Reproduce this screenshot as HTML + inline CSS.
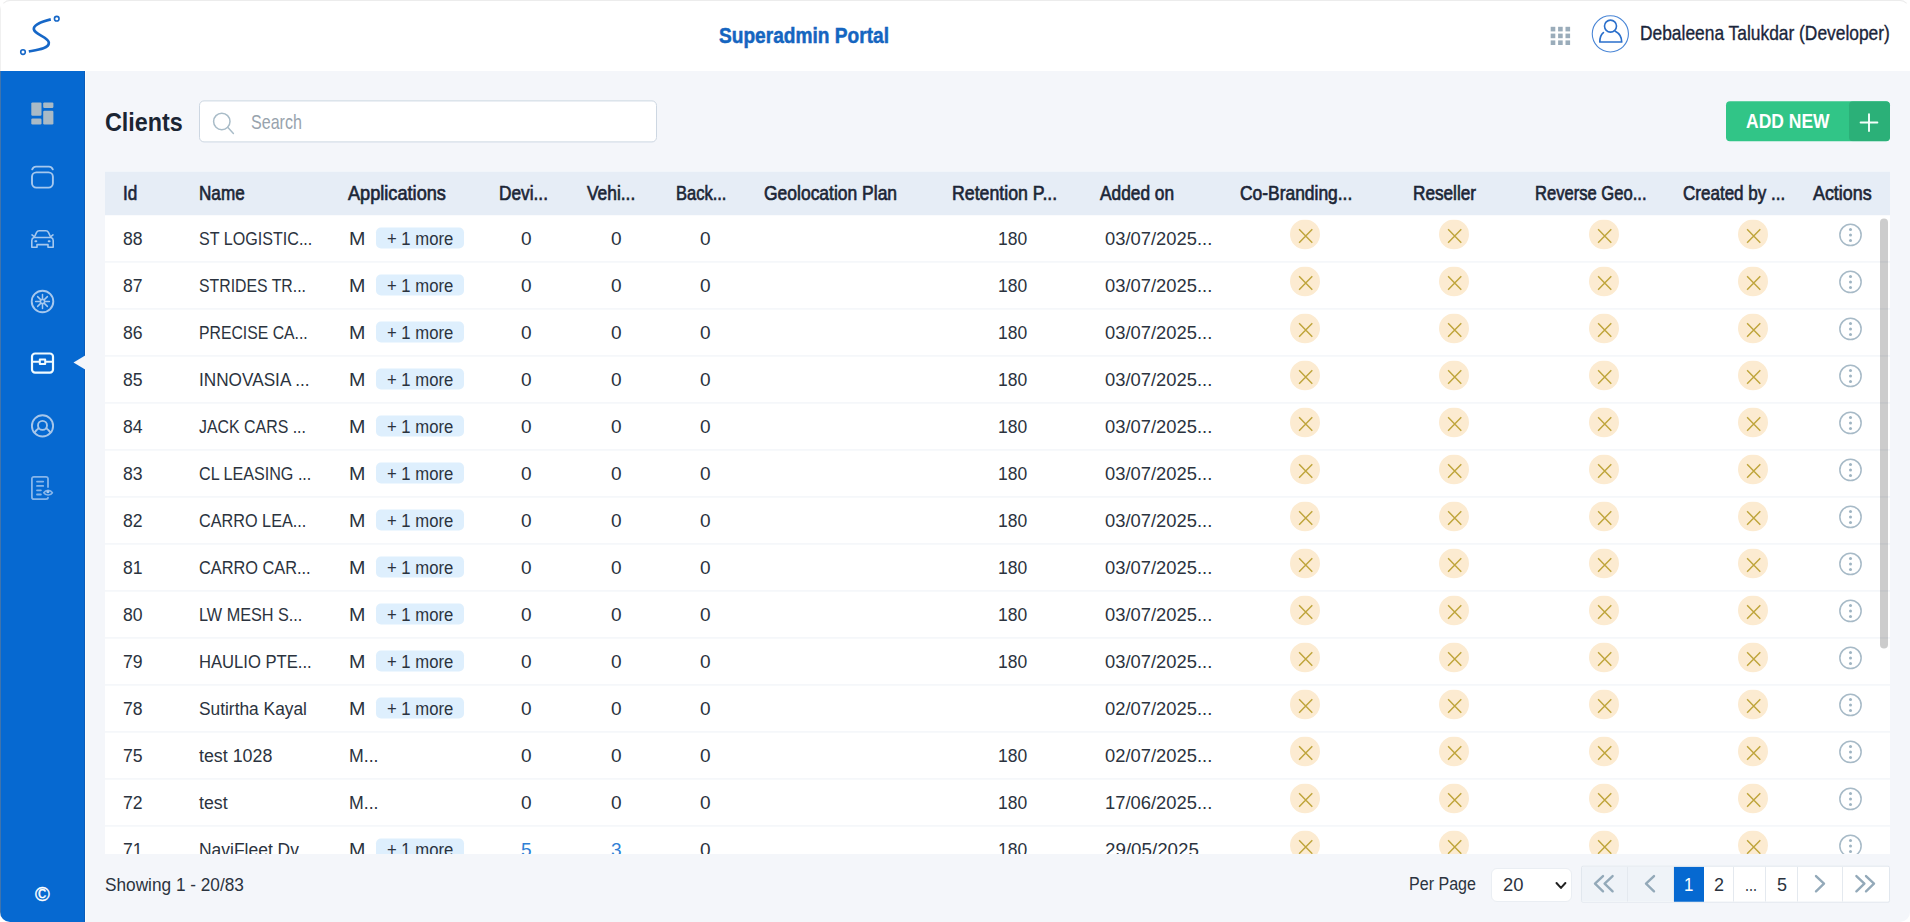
<!DOCTYPE html>
<html lang="en">
<head>
<meta charset="utf-8">
<title>Superadmin Portal - Clients</title>
<style>
*{box-sizing:border-box;margin:0;padding:0}
html,body{width:1910px;height:922px;overflow:hidden;background:#f4f6fa}
body{font-family:"Liberation Sans",sans-serif;font-size:18.7px;color:#2b333e;position:relative}
.t{position:absolute;top:0;white-space:nowrap;display:inline-block;transform-origin:0 50%}
#top{position:absolute;left:0;top:0;width:1910px;height:71px;background:#fff;border-top:1px solid #f0f1f2}
#top .t{line-height:70px}
#side{position:absolute;left:0;top:71px;width:85px;height:851px;background:#0669d1}
#side svg{position:absolute}
#main{position:absolute;left:85px;top:71px;width:1825px;height:851px;background:#f4f6fa}
#title{position:absolute;left:0;top:100px;height:42px;width:190px}
#title .t{line-height:42px;color:#1b2533}
#search{position:absolute;left:199px;top:100px;width:458px;height:42.3px;border:1px solid #cdd7e2;border-radius:5px;background:#fff;transform:translateY(0.4px)}
#search .t{line-height:43px;color:#98a3ad}
#search svg{position:absolute;left:11px;top:7.6px}
#add{position:absolute;left:1726px;top:101px;width:164px;height:40px;transform:translateY(0.35px);border-radius:4px;background:#31c587;overflow:hidden}
#add i{position:absolute;right:0;top:0;width:41px;height:40px;background:#2bb078;border-radius:4px}
#add .t{line-height:40px;color:#fff}
#add svg{position:absolute;left:133px;top:10.6px}
#tbl{position:absolute;left:105px;top:171px;width:1785px;height:683px;overflow:hidden;background:#fff}
#tin{position:absolute;left:0;top:0;width:1785px;height:760px;transform:translateY(0.45px)}
#thead{position:absolute;left:0;top:0;width:1785px;height:44px;background:#e6edf6}
#thead .t{line-height:44px;color:#1c2636}
#tbody{position:absolute;left:0;top:44px;width:1785px}
.row{position:relative;height:47px;background:#fff}
.row::after{content:"";position:absolute;left:0;width:1785px;top:45.5px;height:2px;background:#edf1f6}
.row .t{line-height:47px}
.row .lk{color:#2f7fd6}
.bdg{position:absolute;left:271.2px;top:12.1px;width:87.6px;height:21px;border-radius:5px;background:#deeffd}
.xi{position:absolute;top:4px}
.ai{position:absolute;top:7px}
#sb{position:absolute;left:1880px;top:218px;width:8px;height:430px;border-radius:4px;background:rgba(0,0,0,0.2);transform:translateY(0.4px)}
#foot .t{line-height:36px}
#showing{position:absolute;left:105px;top:867px;height:36px}
#perpage{position:absolute;left:1409px;top:866px;height:36px}
#sel{position:absolute;left:1491px;top:868px;width:81px;height:34px;border:1px solid #eaeef3;border-radius:6px;background:#fff}
#sel .t{line-height:32px;color:#2b333e}
#sel svg{position:absolute;left:62px;top:11px}
#pg{position:absolute;left:1581px;top:866px;width:309px;height:37px;border:1px solid #e1e7ee;border-radius:2px;background:#fff;overflow:hidden;transform:translateY(-0.3px)}
#pg div{position:absolute;top:0;height:35px;border-right:1px solid #e4e9ef}
#pg .t{line-height:36px}
#pg svg{position:absolute;top:6.2px}
#frame{position:absolute;left:0;top:0;width:1910px;height:922px;border-radius:10px;border:1px solid transparent;border-top-color:#ececec;box-shadow:0 0 0 30px #fff;pointer-events:none}
#edge{position:absolute;left:0;top:71px;width:1px;height:851px;background:#3f74ad}
#edge2{position:absolute;left:0;top:0;width:1px;height:71px;background:#f0f0f0}
#ring{position:absolute;left:84px;top:71px;width:2px;height:851px;background:linear-gradient(90deg,#0a5cba 0,#0a5cba 1px,#f9fcfe 1px,#f9fcfe 2px)}
</style>
</head>
<body>
<div id="top">
  <svg style="position:absolute;left:14px;top:9px" width="52" height="52" viewBox="0 0 52 52" fill="none" stroke="#1667c7">
    <circle cx="9" cy="42.05" r="2.3" stroke-width="1.6"/>
    <circle cx="42.75" cy="8.72" r="2.3" stroke-width="1.6"/>
    <path d="M36.8 9.35 C28 11.5 19.2 14.5 19.85 19.3 C20.5 24.5 34.6 27 34.85 32.8 C35 38.5 24 39.8 14.8 41.45" stroke-width="2.7"/>
  </svg>
  <span class="t" style="left:719.0px;transform:scaleX(0.8852);font-size:21.6px;font-weight:700;color:#1565c0;top:0px;-webkit-text-stroke:0.5px #1565c0;">Superadmin Portal</span>
  <svg style="position:absolute;left:1550px;top:25px" width="22" height="21" viewBox="0 0 22 21" fill="#9aacba">
    <rect x="0.7" y="0.8" width="4.6" height="4.6"/><rect x="8.1" y="0.8" width="4.6" height="4.6"/><rect x="15.5" y="0.8" width="4.6" height="4.6"/>
    <rect x="0.7" y="7.6" width="4.6" height="4.6"/><rect x="8.1" y="7.6" width="4.6" height="4.6"/><rect x="15.5" y="7.6" width="4.6" height="4.6"/>
    <rect x="0.7" y="14.4" width="4.6" height="4.6"/><rect x="8.1" y="14.4" width="4.6" height="4.6"/><rect x="15.5" y="14.4" width="4.6" height="4.6"/>
  </svg>
  <svg style="position:absolute;left:1591px;top:14px" width="39" height="39" viewBox="0 0 39 39" fill="none" stroke="#2a6fcb">
    <circle cx="19.35" cy="18.86" r="18.1" stroke-width="1.1" stroke="#4a86d6"/>
    <circle cx="19.5" cy="11.1" r="6.0" stroke-width="1.6"/>
    <path d="M12.4 17.6 C9.8 19.6 8.8 23 8.8 27 L30.7 27 C30.7 22.5 28.3 18.4 24.3 16.3" stroke-width="1.7" stroke-linejoin="round" stroke-linecap="round"/>
  </svg>
  <span class="t" style="left:1640.0px;transform:scaleX(0.8399);font-size:20.7px;color:#1b263b;top:-3.5px;-webkit-text-stroke:0.35px #1b263b;">Debaleena Talukdar (Developer)</span>
</div>

<div id="side">
  <!-- dashboard -->
  <svg style="left:31px;top:31px" width="23" height="23" viewBox="0 0 23 23" fill="#a9bac6">
    <rect x="0.3" y="0.4" width="10.2" height="13.4" rx="1.2"/><rect x="12.2" y="0.4" width="10.2" height="5.6" rx="1.2"/>
    <rect x="0.3" y="16.6" width="10.2" height="5.8" rx="1.2"/><rect x="12.2" y="8.8" width="10.2" height="13.6" rx="1.2"/>
  </svg>
  <!-- layers/card -->
  <svg style="left:30px;top:93px" width="25" height="26" viewBox="0 0 25 26" fill="none" stroke="#a6c8ee" stroke-width="1.9" stroke-linecap="round">
    <rect x="2" y="8.4" width="20.9" height="15.2" rx="4.4"/>
    <path d="M2.2 5.3 C3.2 3.3 4.4 2.6 6 2.6 L19 2.6 C20.6 2.6 21.8 3.3 22.8 5.3"/>
  </svg>
  <!-- car -->
  <svg style="left:30px;top:158px" width="25" height="21" viewBox="0 0 25 21" fill="none" stroke="#a6c8ee" stroke-width="1.6" stroke-linejoin="round" stroke-linecap="round">
    <path d="M4.4 8 L6.6 3.4 C7.2 2.2 8 1.8 9.2 1.8 L15.8 1.8 C17 1.8 17.8 2.2 18.4 3.4 L20.6 8"/>
    <path d="M2 5.9 L3.6 7.1 M23 5.9 L21.4 7.1"/>
    <path d="M4 8.5 L21 8.5 C22.6 9 23.2 10 23.2 11.4 L23.2 18.2 L18 18.2 L18 15.6 L7 15.6 L7 18.2 L1.8 18.2 L1.8 11.4 C1.8 10 2.4 9 4 8.5 Z"/>
    <path d="M5.4 12.2 L6.3 12.2 M18.7 12.2 L19.6 12.2" stroke-width="2"/>
  </svg>
  <!-- wheel -->
  <svg style="left:30px;top:217.5px" width="25" height="25" viewBox="0 0 25 25" fill="none" stroke="#a6c8ee" stroke-width="1.5" stroke-linecap="round">
    <circle cx="12.5" cy="12.5" r="10.8" stroke-width="1.9"/>
    <circle cx="12.5" cy="12.5" r="2.1" stroke-width="1.6"/>
    <path d="M12.5 5.6 V9.6 M12.5 15.4 V19.4 M5.6 12.5 H9.6 M15.4 12.5 H19.4 M7.6 7.6 L10.4 10.4 M14.6 14.6 L17.4 17.4 M17.4 7.6 L14.6 10.4 M10.4 14.6 L7.6 17.4"/>
  </svg>
  <!-- active: chest -->
  <svg style="left:30px;top:281px" width="25" height="23" viewBox="0 0 25 23" fill="none" stroke="#f0fbff" stroke-width="2.2" stroke-linejoin="round">
    <rect x="2" y="1.5" width="21" height="19.1" rx="3.1"/>
    <path d="M2 9.8 H9.8 M15.2 9.8 H23" stroke-width="2"/>
    <rect x="9.8" y="7.5" width="5.4" height="4.5" stroke-width="2"/>
  </svg>
  
  <!-- user -->
  <svg style="left:30px;top:343px" width="25" height="25" viewBox="0 0 25 25" fill="none" stroke="#a6c6ea" stroke-width="1.9" stroke-linecap="round">
    <circle cx="12.5" cy="11.9" r="10.6"/>
    <circle cx="12.5" cy="11.4" r="4.5"/>
    <path d="M4.7 18.6 C6 16.5 7.4 15.2 8.7 14.3 M20.3 18.6 C19 16.5 17.6 15.2 16.3 14.3"/>
  </svg>
  <!-- report -->
  <svg style="left:30px;top:405px" width="25" height="25" viewBox="0 0 25 25" fill="none" stroke="#86b5ea" stroke-width="1.8" stroke-linecap="round" stroke-linejoin="round">
    <path d="M18 11 V2.8 C18 1.6 17.2 0.9 16 0.9 H3.9 C2.7 0.9 1.9 1.6 1.9 2.8 V21.3 C1.9 22.5 2.7 23.2 3.9 23.2 H16 C17.2 23.2 18 22.6 18 21.6"/>
    <path d="M7 5.6 H13.2 M7 9.9 H13.2 M7 14.3 H10.9 M7 18.5 H10.9"/>
    <path d="M13.8 16.7 C15.8 13.6 20.4 13.6 22.4 16.7 C20.4 19.8 15.8 19.8 13.8 16.7 Z" stroke-width="1.6"/>
    <circle cx="17.9" cy="15.7" r="1.5" fill="#a6c8ee" stroke="none"/>
  </svg>
  <span class="t" style="left:35px;top:812px;line-height:22px;font-size:20px;color:#fff;-webkit-text-stroke:0.4px #fff">©</span>
</div>

<div id="title"><span class="t" style="left:105.0px;transform:translateY(0.6px) scaleX(0.9334);font-size:25px;font-weight:700;">Clients</span></div>
<div id="search">
  <svg width="26" height="26" viewBox="0 0 26 26" fill="none" stroke="#a9bcc8" stroke-width="1.5" stroke-linecap="round"><circle cx="10.8" cy="12.05" r="8.2"/><path d="M16.7 17.9 L22.4 24"/></svg>
  <span class="t" style="left:51.4px;transform:scaleX(0.8129);font-size:19.8px;">Search</span>
</div>
<div id="add"><i></i><span class="t" style="left:20.0px;transform:scaleX(0.8413);font-size:20.8px;font-weight:700;">ADD NEW</span>
  <svg width="20" height="20" viewBox="0 0 20 20" stroke="#f4fffa" stroke-width="1.9" stroke-linecap="round"><path d="M10 1.8 V18.6 M1.6 10.2 H18.4"/></svg>
</div>

<div id="tbl"><div id="tin">
  <div id="thead"><span class="t" style="left:18.4px;transform:translateY(-0.35px) scaleX(0.8659);font-size:19.8px;-webkit-text-stroke:0.65px #1c2636;">Id</span><span class="t" style="left:93.8px;transform:translateY(-0.35px) scaleX(0.8652);font-size:19.8px;-webkit-text-stroke:0.65px #1c2636;">Name</span><span class="t" style="left:243.3px;transform:translateY(-0.35px) scaleX(0.9179);font-size:19.8px;-webkit-text-stroke:0.65px #1c2636;">Applications</span><span class="t" style="left:393.8px;transform:translateY(-0.35px) scaleX(0.8732);font-size:19.8px;-webkit-text-stroke:0.65px #1c2636;">Devi...</span><span class="t" style="left:482.1px;transform:translateY(-0.35px) scaleX(0.8775);font-size:19.8px;-webkit-text-stroke:0.65px #1c2636;">Vehi...</span><span class="t" style="left:571.1px;transform:translateY(-0.35px) scaleX(0.8344);font-size:19.8px;-webkit-text-stroke:0.65px #1c2636;">Back...</span><span class="t" style="left:659.1px;transform:translateY(-0.35px) scaleX(0.8833);font-size:19.8px;-webkit-text-stroke:0.65px #1c2636;">Geolocation Plan</span><span class="t" style="left:847.1px;transform:translateY(-0.35px) scaleX(0.8968);font-size:19.8px;-webkit-text-stroke:0.65px #1c2636;">Retention P...</span><span class="t" style="left:994.6px;transform:translateY(-0.35px) scaleX(0.8740);font-size:19.8px;-webkit-text-stroke:0.65px #1c2636;">Added on</span><span class="t" style="left:1135.3px;transform:translateY(-0.35px) scaleX(0.8804);font-size:19.8px;-webkit-text-stroke:0.65px #1c2636;">Co-Branding...</span><span class="t" style="left:1307.5px;transform:translateY(-0.35px) scaleX(0.8688);font-size:19.8px;-webkit-text-stroke:0.65px #1c2636;">Reseller</span><span class="t" style="left:1430.4px;transform:translateY(-0.35px) scaleX(0.8381);font-size:19.8px;-webkit-text-stroke:0.65px #1c2636;">Reverse Geo...</span><span class="t" style="left:1578.0px;transform:translateY(-0.35px) scaleX(0.8607);font-size:19.8px;-webkit-text-stroke:0.65px #1c2636;">Created by ...</span><span class="t" style="left:1708.4px;transform:translateY(-0.35px) scaleX(0.9040);font-size:19.8px;-webkit-text-stroke:0.65px #1c2636;">Actions</span></div>
  <div id="tbody">
<div class="row"><span class="t" style="left:18.2px;transform:translateY(-0.35px) scaleX(0.9423);">88</span><span class="t" style="left:94.0px;transform:translateY(-0.35px) scaleX(0.8615);">ST LOGISTIC...</span><span class="t" style="left:243.7px;transform:translateY(-0.35px) scaleX(1.0528);">M</span><span class="bdg"></span><span class="t" style="left:282.3px;transform:translateY(-0.35px) scaleX(0.8921);">+ 1 more</span><span class="t" style="left:416.2px;transform:translateY(-0.35px) scaleX(1.0192);">0</span><span class="t" style="left:505.7px;transform:translateY(-0.35px) scaleX(1.0192);">0</span><span class="t" style="left:595.2px;transform:translateY(-0.35px) scaleX(1.0192);">0</span><span class="t" style="left:893.3px;transform:translateY(-0.35px) scaleX(0.9359);">180</span><span class="t" style="left:999.8px;transform:translateY(-0.35px) scaleX(0.9828);">03/07/2025...</span><svg class="xi" style="left:1184.5px" width="30" height="30" viewBox="0 0 30 30"><circle cx="15" cy="15" r="15" fill="#fcebd1"/><path d="M9.1 9.7 L22.3 23.3 M22.3 9.7 L9.1 23.3" stroke="#bfa53c" stroke-width="1.45" fill="none"/></svg><svg class="xi" style="left:1334px" width="30" height="30" viewBox="0 0 30 30"><circle cx="15" cy="15" r="15" fill="#fcebd1"/><path d="M9.1 9.7 L22.3 23.3 M22.3 9.7 L9.1 23.3" stroke="#bfa53c" stroke-width="1.45" fill="none"/></svg><svg class="xi" style="left:1483.5px" width="30" height="30" viewBox="0 0 30 30"><circle cx="15" cy="15" r="15" fill="#fcebd1"/><path d="M9.1 9.7 L22.3 23.3 M22.3 9.7 L9.1 23.3" stroke="#bfa53c" stroke-width="1.45" fill="none"/></svg><svg class="xi" style="left:1633px" width="30" height="30" viewBox="0 0 30 30"><circle cx="15" cy="15" r="15" fill="#fcebd1"/><path d="M9.1 9.7 L22.3 23.3 M22.3 9.7 L9.1 23.3" stroke="#bfa53c" stroke-width="1.45" fill="none"/></svg><svg class="ai" style="left:1733px" width="26" height="26" viewBox="0 0 26 26"><circle cx="12.5" cy="12.45" r="10.65" fill="#fff" stroke="#a7bac7" stroke-width="1.5"/><circle cx="12.5" cy="6.95" r="1.5" fill="#9fb4c2"/><circle cx="12.5" cy="12.45" r="1.5" fill="#9fb4c2"/><circle cx="12.5" cy="17.95" r="1.5" fill="#9fb4c2"/></svg></div>
<div class="row"><span class="t" style="left:18.2px;transform:translateY(-0.35px) scaleX(0.9423);">87</span><span class="t" style="left:94.0px;transform:translateY(-0.35px) scaleX(0.8464);">STRIDES TR...</span><span class="t" style="left:243.7px;transform:translateY(-0.35px) scaleX(1.0528);">M</span><span class="bdg"></span><span class="t" style="left:282.3px;transform:translateY(-0.35px) scaleX(0.8921);">+ 1 more</span><span class="t" style="left:416.2px;transform:translateY(-0.35px) scaleX(1.0192);">0</span><span class="t" style="left:505.7px;transform:translateY(-0.35px) scaleX(1.0192);">0</span><span class="t" style="left:595.2px;transform:translateY(-0.35px) scaleX(1.0192);">0</span><span class="t" style="left:893.3px;transform:translateY(-0.35px) scaleX(0.9359);">180</span><span class="t" style="left:999.8px;transform:translateY(-0.35px) scaleX(0.9828);">03/07/2025...</span><svg class="xi" style="left:1184.5px" width="30" height="30" viewBox="0 0 30 30"><circle cx="15" cy="15" r="15" fill="#fcebd1"/><path d="M9.1 9.7 L22.3 23.3 M22.3 9.7 L9.1 23.3" stroke="#bfa53c" stroke-width="1.45" fill="none"/></svg><svg class="xi" style="left:1334px" width="30" height="30" viewBox="0 0 30 30"><circle cx="15" cy="15" r="15" fill="#fcebd1"/><path d="M9.1 9.7 L22.3 23.3 M22.3 9.7 L9.1 23.3" stroke="#bfa53c" stroke-width="1.45" fill="none"/></svg><svg class="xi" style="left:1483.5px" width="30" height="30" viewBox="0 0 30 30"><circle cx="15" cy="15" r="15" fill="#fcebd1"/><path d="M9.1 9.7 L22.3 23.3 M22.3 9.7 L9.1 23.3" stroke="#bfa53c" stroke-width="1.45" fill="none"/></svg><svg class="xi" style="left:1633px" width="30" height="30" viewBox="0 0 30 30"><circle cx="15" cy="15" r="15" fill="#fcebd1"/><path d="M9.1 9.7 L22.3 23.3 M22.3 9.7 L9.1 23.3" stroke="#bfa53c" stroke-width="1.45" fill="none"/></svg><svg class="ai" style="left:1733px" width="26" height="26" viewBox="0 0 26 26"><circle cx="12.5" cy="12.45" r="10.65" fill="#fff" stroke="#a7bac7" stroke-width="1.5"/><circle cx="12.5" cy="6.95" r="1.5" fill="#9fb4c2"/><circle cx="12.5" cy="12.45" r="1.5" fill="#9fb4c2"/><circle cx="12.5" cy="17.95" r="1.5" fill="#9fb4c2"/></svg></div>
<div class="row"><span class="t" style="left:18.2px;transform:translateY(-0.35px) scaleX(0.9423);">86</span><span class="t" style="left:94.0px;transform:translateY(-0.35px) scaleX(0.8443);">PRECISE CA...</span><span class="t" style="left:243.7px;transform:translateY(-0.35px) scaleX(1.0528);">M</span><span class="bdg"></span><span class="t" style="left:282.3px;transform:translateY(-0.35px) scaleX(0.8921);">+ 1 more</span><span class="t" style="left:416.2px;transform:translateY(-0.35px) scaleX(1.0192);">0</span><span class="t" style="left:505.7px;transform:translateY(-0.35px) scaleX(1.0192);">0</span><span class="t" style="left:595.2px;transform:translateY(-0.35px) scaleX(1.0192);">0</span><span class="t" style="left:893.3px;transform:translateY(-0.35px) scaleX(0.9359);">180</span><span class="t" style="left:999.8px;transform:translateY(-0.35px) scaleX(0.9828);">03/07/2025...</span><svg class="xi" style="left:1184.5px" width="30" height="30" viewBox="0 0 30 30"><circle cx="15" cy="15" r="15" fill="#fcebd1"/><path d="M9.1 9.7 L22.3 23.3 M22.3 9.7 L9.1 23.3" stroke="#bfa53c" stroke-width="1.45" fill="none"/></svg><svg class="xi" style="left:1334px" width="30" height="30" viewBox="0 0 30 30"><circle cx="15" cy="15" r="15" fill="#fcebd1"/><path d="M9.1 9.7 L22.3 23.3 M22.3 9.7 L9.1 23.3" stroke="#bfa53c" stroke-width="1.45" fill="none"/></svg><svg class="xi" style="left:1483.5px" width="30" height="30" viewBox="0 0 30 30"><circle cx="15" cy="15" r="15" fill="#fcebd1"/><path d="M9.1 9.7 L22.3 23.3 M22.3 9.7 L9.1 23.3" stroke="#bfa53c" stroke-width="1.45" fill="none"/></svg><svg class="xi" style="left:1633px" width="30" height="30" viewBox="0 0 30 30"><circle cx="15" cy="15" r="15" fill="#fcebd1"/><path d="M9.1 9.7 L22.3 23.3 M22.3 9.7 L9.1 23.3" stroke="#bfa53c" stroke-width="1.45" fill="none"/></svg><svg class="ai" style="left:1733px" width="26" height="26" viewBox="0 0 26 26"><circle cx="12.5" cy="12.45" r="10.65" fill="#fff" stroke="#a7bac7" stroke-width="1.5"/><circle cx="12.5" cy="6.95" r="1.5" fill="#9fb4c2"/><circle cx="12.5" cy="12.45" r="1.5" fill="#9fb4c2"/><circle cx="12.5" cy="17.95" r="1.5" fill="#9fb4c2"/></svg></div>
<div class="row"><span class="t" style="left:18.2px;transform:translateY(-0.35px) scaleX(0.9423);">85</span><span class="t" style="left:94.0px;transform:translateY(-0.35px) scaleX(0.9201);">INNOVASIA ...</span><span class="t" style="left:243.7px;transform:translateY(-0.35px) scaleX(1.0528);">M</span><span class="bdg"></span><span class="t" style="left:282.3px;transform:translateY(-0.35px) scaleX(0.8921);">+ 1 more</span><span class="t" style="left:416.2px;transform:translateY(-0.35px) scaleX(1.0192);">0</span><span class="t" style="left:505.7px;transform:translateY(-0.35px) scaleX(1.0192);">0</span><span class="t" style="left:595.2px;transform:translateY(-0.35px) scaleX(1.0192);">0</span><span class="t" style="left:893.3px;transform:translateY(-0.35px) scaleX(0.9359);">180</span><span class="t" style="left:999.8px;transform:translateY(-0.35px) scaleX(0.9828);">03/07/2025...</span><svg class="xi" style="left:1184.5px" width="30" height="30" viewBox="0 0 30 30"><circle cx="15" cy="15" r="15" fill="#fcebd1"/><path d="M9.1 9.7 L22.3 23.3 M22.3 9.7 L9.1 23.3" stroke="#bfa53c" stroke-width="1.45" fill="none"/></svg><svg class="xi" style="left:1334px" width="30" height="30" viewBox="0 0 30 30"><circle cx="15" cy="15" r="15" fill="#fcebd1"/><path d="M9.1 9.7 L22.3 23.3 M22.3 9.7 L9.1 23.3" stroke="#bfa53c" stroke-width="1.45" fill="none"/></svg><svg class="xi" style="left:1483.5px" width="30" height="30" viewBox="0 0 30 30"><circle cx="15" cy="15" r="15" fill="#fcebd1"/><path d="M9.1 9.7 L22.3 23.3 M22.3 9.7 L9.1 23.3" stroke="#bfa53c" stroke-width="1.45" fill="none"/></svg><svg class="xi" style="left:1633px" width="30" height="30" viewBox="0 0 30 30"><circle cx="15" cy="15" r="15" fill="#fcebd1"/><path d="M9.1 9.7 L22.3 23.3 M22.3 9.7 L9.1 23.3" stroke="#bfa53c" stroke-width="1.45" fill="none"/></svg><svg class="ai" style="left:1733px" width="26" height="26" viewBox="0 0 26 26"><circle cx="12.5" cy="12.45" r="10.65" fill="#fff" stroke="#a7bac7" stroke-width="1.5"/><circle cx="12.5" cy="6.95" r="1.5" fill="#9fb4c2"/><circle cx="12.5" cy="12.45" r="1.5" fill="#9fb4c2"/><circle cx="12.5" cy="17.95" r="1.5" fill="#9fb4c2"/></svg></div>
<div class="row"><span class="t" style="left:18.2px;transform:translateY(-0.35px) scaleX(0.9423);">84</span><span class="t" style="left:94.0px;transform:translateY(-0.35px) scaleX(0.8510);">JACK CARS ...</span><span class="t" style="left:243.7px;transform:translateY(-0.35px) scaleX(1.0528);">M</span><span class="bdg"></span><span class="t" style="left:282.3px;transform:translateY(-0.35px) scaleX(0.8921);">+ 1 more</span><span class="t" style="left:416.2px;transform:translateY(-0.35px) scaleX(1.0192);">0</span><span class="t" style="left:505.7px;transform:translateY(-0.35px) scaleX(1.0192);">0</span><span class="t" style="left:595.2px;transform:translateY(-0.35px) scaleX(1.0192);">0</span><span class="t" style="left:893.3px;transform:translateY(-0.35px) scaleX(0.9359);">180</span><span class="t" style="left:999.8px;transform:translateY(-0.35px) scaleX(0.9828);">03/07/2025...</span><svg class="xi" style="left:1184.5px" width="30" height="30" viewBox="0 0 30 30"><circle cx="15" cy="15" r="15" fill="#fcebd1"/><path d="M9.1 9.7 L22.3 23.3 M22.3 9.7 L9.1 23.3" stroke="#bfa53c" stroke-width="1.45" fill="none"/></svg><svg class="xi" style="left:1334px" width="30" height="30" viewBox="0 0 30 30"><circle cx="15" cy="15" r="15" fill="#fcebd1"/><path d="M9.1 9.7 L22.3 23.3 M22.3 9.7 L9.1 23.3" stroke="#bfa53c" stroke-width="1.45" fill="none"/></svg><svg class="xi" style="left:1483.5px" width="30" height="30" viewBox="0 0 30 30"><circle cx="15" cy="15" r="15" fill="#fcebd1"/><path d="M9.1 9.7 L22.3 23.3 M22.3 9.7 L9.1 23.3" stroke="#bfa53c" stroke-width="1.45" fill="none"/></svg><svg class="xi" style="left:1633px" width="30" height="30" viewBox="0 0 30 30"><circle cx="15" cy="15" r="15" fill="#fcebd1"/><path d="M9.1 9.7 L22.3 23.3 M22.3 9.7 L9.1 23.3" stroke="#bfa53c" stroke-width="1.45" fill="none"/></svg><svg class="ai" style="left:1733px" width="26" height="26" viewBox="0 0 26 26"><circle cx="12.5" cy="12.45" r="10.65" fill="#fff" stroke="#a7bac7" stroke-width="1.5"/><circle cx="12.5" cy="6.95" r="1.5" fill="#9fb4c2"/><circle cx="12.5" cy="12.45" r="1.5" fill="#9fb4c2"/><circle cx="12.5" cy="17.95" r="1.5" fill="#9fb4c2"/></svg></div>
<div class="row"><span class="t" style="left:18.2px;transform:translateY(-0.35px) scaleX(0.9423);">83</span><span class="t" style="left:94.0px;transform:translateY(-0.35px) scaleX(0.8629);">CL LEASING ...</span><span class="t" style="left:243.7px;transform:translateY(-0.35px) scaleX(1.0528);">M</span><span class="bdg"></span><span class="t" style="left:282.3px;transform:translateY(-0.35px) scaleX(0.8921);">+ 1 more</span><span class="t" style="left:416.2px;transform:translateY(-0.35px) scaleX(1.0192);">0</span><span class="t" style="left:505.7px;transform:translateY(-0.35px) scaleX(1.0192);">0</span><span class="t" style="left:595.2px;transform:translateY(-0.35px) scaleX(1.0192);">0</span><span class="t" style="left:893.3px;transform:translateY(-0.35px) scaleX(0.9359);">180</span><span class="t" style="left:999.8px;transform:translateY(-0.35px) scaleX(0.9828);">03/07/2025...</span><svg class="xi" style="left:1184.5px" width="30" height="30" viewBox="0 0 30 30"><circle cx="15" cy="15" r="15" fill="#fcebd1"/><path d="M9.1 9.7 L22.3 23.3 M22.3 9.7 L9.1 23.3" stroke="#bfa53c" stroke-width="1.45" fill="none"/></svg><svg class="xi" style="left:1334px" width="30" height="30" viewBox="0 0 30 30"><circle cx="15" cy="15" r="15" fill="#fcebd1"/><path d="M9.1 9.7 L22.3 23.3 M22.3 9.7 L9.1 23.3" stroke="#bfa53c" stroke-width="1.45" fill="none"/></svg><svg class="xi" style="left:1483.5px" width="30" height="30" viewBox="0 0 30 30"><circle cx="15" cy="15" r="15" fill="#fcebd1"/><path d="M9.1 9.7 L22.3 23.3 M22.3 9.7 L9.1 23.3" stroke="#bfa53c" stroke-width="1.45" fill="none"/></svg><svg class="xi" style="left:1633px" width="30" height="30" viewBox="0 0 30 30"><circle cx="15" cy="15" r="15" fill="#fcebd1"/><path d="M9.1 9.7 L22.3 23.3 M22.3 9.7 L9.1 23.3" stroke="#bfa53c" stroke-width="1.45" fill="none"/></svg><svg class="ai" style="left:1733px" width="26" height="26" viewBox="0 0 26 26"><circle cx="12.5" cy="12.45" r="10.65" fill="#fff" stroke="#a7bac7" stroke-width="1.5"/><circle cx="12.5" cy="6.95" r="1.5" fill="#9fb4c2"/><circle cx="12.5" cy="12.45" r="1.5" fill="#9fb4c2"/><circle cx="12.5" cy="17.95" r="1.5" fill="#9fb4c2"/></svg></div>
<div class="row"><span class="t" style="left:18.2px;transform:translateY(-0.35px) scaleX(0.9423);">82</span><span class="t" style="left:94.0px;transform:translateY(-0.35px) scaleX(0.8685);">CARRO LEA...</span><span class="t" style="left:243.7px;transform:translateY(-0.35px) scaleX(1.0528);">M</span><span class="bdg"></span><span class="t" style="left:282.3px;transform:translateY(-0.35px) scaleX(0.8921);">+ 1 more</span><span class="t" style="left:416.2px;transform:translateY(-0.35px) scaleX(1.0192);">0</span><span class="t" style="left:505.7px;transform:translateY(-0.35px) scaleX(1.0192);">0</span><span class="t" style="left:595.2px;transform:translateY(-0.35px) scaleX(1.0192);">0</span><span class="t" style="left:893.3px;transform:translateY(-0.35px) scaleX(0.9359);">180</span><span class="t" style="left:999.8px;transform:translateY(-0.35px) scaleX(0.9828);">03/07/2025...</span><svg class="xi" style="left:1184.5px" width="30" height="30" viewBox="0 0 30 30"><circle cx="15" cy="15" r="15" fill="#fcebd1"/><path d="M9.1 9.7 L22.3 23.3 M22.3 9.7 L9.1 23.3" stroke="#bfa53c" stroke-width="1.45" fill="none"/></svg><svg class="xi" style="left:1334px" width="30" height="30" viewBox="0 0 30 30"><circle cx="15" cy="15" r="15" fill="#fcebd1"/><path d="M9.1 9.7 L22.3 23.3 M22.3 9.7 L9.1 23.3" stroke="#bfa53c" stroke-width="1.45" fill="none"/></svg><svg class="xi" style="left:1483.5px" width="30" height="30" viewBox="0 0 30 30"><circle cx="15" cy="15" r="15" fill="#fcebd1"/><path d="M9.1 9.7 L22.3 23.3 M22.3 9.7 L9.1 23.3" stroke="#bfa53c" stroke-width="1.45" fill="none"/></svg><svg class="xi" style="left:1633px" width="30" height="30" viewBox="0 0 30 30"><circle cx="15" cy="15" r="15" fill="#fcebd1"/><path d="M9.1 9.7 L22.3 23.3 M22.3 9.7 L9.1 23.3" stroke="#bfa53c" stroke-width="1.45" fill="none"/></svg><svg class="ai" style="left:1733px" width="26" height="26" viewBox="0 0 26 26"><circle cx="12.5" cy="12.45" r="10.65" fill="#fff" stroke="#a7bac7" stroke-width="1.5"/><circle cx="12.5" cy="6.95" r="1.5" fill="#9fb4c2"/><circle cx="12.5" cy="12.45" r="1.5" fill="#9fb4c2"/><circle cx="12.5" cy="17.95" r="1.5" fill="#9fb4c2"/></svg></div>
<div class="row"><span class="t" style="left:18.2px;transform:translateY(-0.35px) scaleX(0.9423);">81</span><span class="t" style="left:94.0px;transform:translateY(-0.35px) scaleX(0.8740);">CARRO CAR...</span><span class="t" style="left:243.7px;transform:translateY(-0.35px) scaleX(1.0528);">M</span><span class="bdg"></span><span class="t" style="left:282.3px;transform:translateY(-0.35px) scaleX(0.8921);">+ 1 more</span><span class="t" style="left:416.2px;transform:translateY(-0.35px) scaleX(1.0192);">0</span><span class="t" style="left:505.7px;transform:translateY(-0.35px) scaleX(1.0192);">0</span><span class="t" style="left:595.2px;transform:translateY(-0.35px) scaleX(1.0192);">0</span><span class="t" style="left:893.3px;transform:translateY(-0.35px) scaleX(0.9359);">180</span><span class="t" style="left:999.8px;transform:translateY(-0.35px) scaleX(0.9828);">03/07/2025...</span><svg class="xi" style="left:1184.5px" width="30" height="30" viewBox="0 0 30 30"><circle cx="15" cy="15" r="15" fill="#fcebd1"/><path d="M9.1 9.7 L22.3 23.3 M22.3 9.7 L9.1 23.3" stroke="#bfa53c" stroke-width="1.45" fill="none"/></svg><svg class="xi" style="left:1334px" width="30" height="30" viewBox="0 0 30 30"><circle cx="15" cy="15" r="15" fill="#fcebd1"/><path d="M9.1 9.7 L22.3 23.3 M22.3 9.7 L9.1 23.3" stroke="#bfa53c" stroke-width="1.45" fill="none"/></svg><svg class="xi" style="left:1483.5px" width="30" height="30" viewBox="0 0 30 30"><circle cx="15" cy="15" r="15" fill="#fcebd1"/><path d="M9.1 9.7 L22.3 23.3 M22.3 9.7 L9.1 23.3" stroke="#bfa53c" stroke-width="1.45" fill="none"/></svg><svg class="xi" style="left:1633px" width="30" height="30" viewBox="0 0 30 30"><circle cx="15" cy="15" r="15" fill="#fcebd1"/><path d="M9.1 9.7 L22.3 23.3 M22.3 9.7 L9.1 23.3" stroke="#bfa53c" stroke-width="1.45" fill="none"/></svg><svg class="ai" style="left:1733px" width="26" height="26" viewBox="0 0 26 26"><circle cx="12.5" cy="12.45" r="10.65" fill="#fff" stroke="#a7bac7" stroke-width="1.5"/><circle cx="12.5" cy="6.95" r="1.5" fill="#9fb4c2"/><circle cx="12.5" cy="12.45" r="1.5" fill="#9fb4c2"/><circle cx="12.5" cy="17.95" r="1.5" fill="#9fb4c2"/></svg></div>
<div class="row"><span class="t" style="left:18.2px;transform:translateY(-0.35px) scaleX(0.9423);">80</span><span class="t" style="left:94.0px;transform:translateY(-0.35px) scaleX(0.8679);">LW MESH S...</span><span class="t" style="left:243.7px;transform:translateY(-0.35px) scaleX(1.0528);">M</span><span class="bdg"></span><span class="t" style="left:282.3px;transform:translateY(-0.35px) scaleX(0.8921);">+ 1 more</span><span class="t" style="left:416.2px;transform:translateY(-0.35px) scaleX(1.0192);">0</span><span class="t" style="left:505.7px;transform:translateY(-0.35px) scaleX(1.0192);">0</span><span class="t" style="left:595.2px;transform:translateY(-0.35px) scaleX(1.0192);">0</span><span class="t" style="left:893.3px;transform:translateY(-0.35px) scaleX(0.9359);">180</span><span class="t" style="left:999.8px;transform:translateY(-0.35px) scaleX(0.9828);">03/07/2025...</span><svg class="xi" style="left:1184.5px" width="30" height="30" viewBox="0 0 30 30"><circle cx="15" cy="15" r="15" fill="#fcebd1"/><path d="M9.1 9.7 L22.3 23.3 M22.3 9.7 L9.1 23.3" stroke="#bfa53c" stroke-width="1.45" fill="none"/></svg><svg class="xi" style="left:1334px" width="30" height="30" viewBox="0 0 30 30"><circle cx="15" cy="15" r="15" fill="#fcebd1"/><path d="M9.1 9.7 L22.3 23.3 M22.3 9.7 L9.1 23.3" stroke="#bfa53c" stroke-width="1.45" fill="none"/></svg><svg class="xi" style="left:1483.5px" width="30" height="30" viewBox="0 0 30 30"><circle cx="15" cy="15" r="15" fill="#fcebd1"/><path d="M9.1 9.7 L22.3 23.3 M22.3 9.7 L9.1 23.3" stroke="#bfa53c" stroke-width="1.45" fill="none"/></svg><svg class="xi" style="left:1633px" width="30" height="30" viewBox="0 0 30 30"><circle cx="15" cy="15" r="15" fill="#fcebd1"/><path d="M9.1 9.7 L22.3 23.3 M22.3 9.7 L9.1 23.3" stroke="#bfa53c" stroke-width="1.45" fill="none"/></svg><svg class="ai" style="left:1733px" width="26" height="26" viewBox="0 0 26 26"><circle cx="12.5" cy="12.45" r="10.65" fill="#fff" stroke="#a7bac7" stroke-width="1.5"/><circle cx="12.5" cy="6.95" r="1.5" fill="#9fb4c2"/><circle cx="12.5" cy="12.45" r="1.5" fill="#9fb4c2"/><circle cx="12.5" cy="17.95" r="1.5" fill="#9fb4c2"/></svg></div>
<div class="row"><span class="t" style="left:18.2px;transform:translateY(-0.35px) scaleX(0.9423);">79</span><span class="t" style="left:94.0px;transform:translateY(-0.35px) scaleX(0.8898);">HAULIO PTE...</span><span class="t" style="left:243.7px;transform:translateY(-0.35px) scaleX(1.0528);">M</span><span class="bdg"></span><span class="t" style="left:282.3px;transform:translateY(-0.35px) scaleX(0.8921);">+ 1 more</span><span class="t" style="left:416.2px;transform:translateY(-0.35px) scaleX(1.0192);">0</span><span class="t" style="left:505.7px;transform:translateY(-0.35px) scaleX(1.0192);">0</span><span class="t" style="left:595.2px;transform:translateY(-0.35px) scaleX(1.0192);">0</span><span class="t" style="left:893.3px;transform:translateY(-0.35px) scaleX(0.9359);">180</span><span class="t" style="left:999.8px;transform:translateY(-0.35px) scaleX(0.9828);">03/07/2025...</span><svg class="xi" style="left:1184.5px" width="30" height="30" viewBox="0 0 30 30"><circle cx="15" cy="15" r="15" fill="#fcebd1"/><path d="M9.1 9.7 L22.3 23.3 M22.3 9.7 L9.1 23.3" stroke="#bfa53c" stroke-width="1.45" fill="none"/></svg><svg class="xi" style="left:1334px" width="30" height="30" viewBox="0 0 30 30"><circle cx="15" cy="15" r="15" fill="#fcebd1"/><path d="M9.1 9.7 L22.3 23.3 M22.3 9.7 L9.1 23.3" stroke="#bfa53c" stroke-width="1.45" fill="none"/></svg><svg class="xi" style="left:1483.5px" width="30" height="30" viewBox="0 0 30 30"><circle cx="15" cy="15" r="15" fill="#fcebd1"/><path d="M9.1 9.7 L22.3 23.3 M22.3 9.7 L9.1 23.3" stroke="#bfa53c" stroke-width="1.45" fill="none"/></svg><svg class="xi" style="left:1633px" width="30" height="30" viewBox="0 0 30 30"><circle cx="15" cy="15" r="15" fill="#fcebd1"/><path d="M9.1 9.7 L22.3 23.3 M22.3 9.7 L9.1 23.3" stroke="#bfa53c" stroke-width="1.45" fill="none"/></svg><svg class="ai" style="left:1733px" width="26" height="26" viewBox="0 0 26 26"><circle cx="12.5" cy="12.45" r="10.65" fill="#fff" stroke="#a7bac7" stroke-width="1.5"/><circle cx="12.5" cy="6.95" r="1.5" fill="#9fb4c2"/><circle cx="12.5" cy="12.45" r="1.5" fill="#9fb4c2"/><circle cx="12.5" cy="17.95" r="1.5" fill="#9fb4c2"/></svg></div>
<div class="row"><span class="t" style="left:18.2px;transform:translateY(-0.35px) scaleX(0.9423);">78</span><span class="t" style="left:94.0px;transform:translateY(-0.35px) scaleX(0.9277);">Sutirtha Kayal</span><span class="t" style="left:243.7px;transform:translateY(-0.35px) scaleX(1.0528);">M</span><span class="bdg"></span><span class="t" style="left:282.3px;transform:translateY(-0.35px) scaleX(0.8921);">+ 1 more</span><span class="t" style="left:416.2px;transform:translateY(-0.35px) scaleX(1.0192);">0</span><span class="t" style="left:505.7px;transform:translateY(-0.35px) scaleX(1.0192);">0</span><span class="t" style="left:595.2px;transform:translateY(-0.35px) scaleX(1.0192);">0</span><span class="t" style="left:999.8px;transform:translateY(-0.35px) scaleX(0.9828);">02/07/2025...</span><svg class="xi" style="left:1184.5px" width="30" height="30" viewBox="0 0 30 30"><circle cx="15" cy="15" r="15" fill="#fcebd1"/><path d="M9.1 9.7 L22.3 23.3 M22.3 9.7 L9.1 23.3" stroke="#bfa53c" stroke-width="1.45" fill="none"/></svg><svg class="xi" style="left:1334px" width="30" height="30" viewBox="0 0 30 30"><circle cx="15" cy="15" r="15" fill="#fcebd1"/><path d="M9.1 9.7 L22.3 23.3 M22.3 9.7 L9.1 23.3" stroke="#bfa53c" stroke-width="1.45" fill="none"/></svg><svg class="xi" style="left:1483.5px" width="30" height="30" viewBox="0 0 30 30"><circle cx="15" cy="15" r="15" fill="#fcebd1"/><path d="M9.1 9.7 L22.3 23.3 M22.3 9.7 L9.1 23.3" stroke="#bfa53c" stroke-width="1.45" fill="none"/></svg><svg class="xi" style="left:1633px" width="30" height="30" viewBox="0 0 30 30"><circle cx="15" cy="15" r="15" fill="#fcebd1"/><path d="M9.1 9.7 L22.3 23.3 M22.3 9.7 L9.1 23.3" stroke="#bfa53c" stroke-width="1.45" fill="none"/></svg><svg class="ai" style="left:1733px" width="26" height="26" viewBox="0 0 26 26"><circle cx="12.5" cy="12.45" r="10.65" fill="#fff" stroke="#a7bac7" stroke-width="1.5"/><circle cx="12.5" cy="6.95" r="1.5" fill="#9fb4c2"/><circle cx="12.5" cy="12.45" r="1.5" fill="#9fb4c2"/><circle cx="12.5" cy="17.95" r="1.5" fill="#9fb4c2"/></svg></div>
<div class="row"><span class="t" style="left:18.2px;transform:translateY(-0.35px) scaleX(0.9423);">75</span><span class="t" style="left:94.0px;transform:translateY(-0.35px) scaleX(0.9540);">test 1028</span><span class="t" style="left:243.7px;transform:translateY(-0.35px) scaleX(0.9466);">M...</span><span class="t" style="left:416.2px;transform:translateY(-0.35px) scaleX(1.0192);">0</span><span class="t" style="left:505.7px;transform:translateY(-0.35px) scaleX(1.0192);">0</span><span class="t" style="left:595.2px;transform:translateY(-0.35px) scaleX(1.0192);">0</span><span class="t" style="left:893.3px;transform:translateY(-0.35px) scaleX(0.9359);">180</span><span class="t" style="left:999.8px;transform:translateY(-0.35px) scaleX(0.9828);">02/07/2025...</span><svg class="xi" style="left:1184.5px" width="30" height="30" viewBox="0 0 30 30"><circle cx="15" cy="15" r="15" fill="#fcebd1"/><path d="M9.1 9.7 L22.3 23.3 M22.3 9.7 L9.1 23.3" stroke="#bfa53c" stroke-width="1.45" fill="none"/></svg><svg class="xi" style="left:1334px" width="30" height="30" viewBox="0 0 30 30"><circle cx="15" cy="15" r="15" fill="#fcebd1"/><path d="M9.1 9.7 L22.3 23.3 M22.3 9.7 L9.1 23.3" stroke="#bfa53c" stroke-width="1.45" fill="none"/></svg><svg class="xi" style="left:1483.5px" width="30" height="30" viewBox="0 0 30 30"><circle cx="15" cy="15" r="15" fill="#fcebd1"/><path d="M9.1 9.7 L22.3 23.3 M22.3 9.7 L9.1 23.3" stroke="#bfa53c" stroke-width="1.45" fill="none"/></svg><svg class="xi" style="left:1633px" width="30" height="30" viewBox="0 0 30 30"><circle cx="15" cy="15" r="15" fill="#fcebd1"/><path d="M9.1 9.7 L22.3 23.3 M22.3 9.7 L9.1 23.3" stroke="#bfa53c" stroke-width="1.45" fill="none"/></svg><svg class="ai" style="left:1733px" width="26" height="26" viewBox="0 0 26 26"><circle cx="12.5" cy="12.45" r="10.65" fill="#fff" stroke="#a7bac7" stroke-width="1.5"/><circle cx="12.5" cy="6.95" r="1.5" fill="#9fb4c2"/><circle cx="12.5" cy="12.45" r="1.5" fill="#9fb4c2"/><circle cx="12.5" cy="17.95" r="1.5" fill="#9fb4c2"/></svg></div>
<div class="row"><span class="t" style="left:18.2px;transform:translateY(-0.35px) scaleX(0.9423);">72</span><span class="t" style="left:94.0px;transform:translateY(-0.35px) scaleX(0.9488);">test</span><span class="t" style="left:243.7px;transform:translateY(-0.35px) scaleX(0.9466);">M...</span><span class="t" style="left:416.2px;transform:translateY(-0.35px) scaleX(1.0192);">0</span><span class="t" style="left:505.7px;transform:translateY(-0.35px) scaleX(1.0192);">0</span><span class="t" style="left:595.2px;transform:translateY(-0.35px) scaleX(1.0192);">0</span><span class="t" style="left:893.3px;transform:translateY(-0.35px) scaleX(0.9359);">180</span><span class="t" style="left:999.8px;transform:translateY(-0.35px) scaleX(0.9828);">17/06/2025...</span><svg class="xi" style="left:1184.5px" width="30" height="30" viewBox="0 0 30 30"><circle cx="15" cy="15" r="15" fill="#fcebd1"/><path d="M9.1 9.7 L22.3 23.3 M22.3 9.7 L9.1 23.3" stroke="#bfa53c" stroke-width="1.45" fill="none"/></svg><svg class="xi" style="left:1334px" width="30" height="30" viewBox="0 0 30 30"><circle cx="15" cy="15" r="15" fill="#fcebd1"/><path d="M9.1 9.7 L22.3 23.3 M22.3 9.7 L9.1 23.3" stroke="#bfa53c" stroke-width="1.45" fill="none"/></svg><svg class="xi" style="left:1483.5px" width="30" height="30" viewBox="0 0 30 30"><circle cx="15" cy="15" r="15" fill="#fcebd1"/><path d="M9.1 9.7 L22.3 23.3 M22.3 9.7 L9.1 23.3" stroke="#bfa53c" stroke-width="1.45" fill="none"/></svg><svg class="xi" style="left:1633px" width="30" height="30" viewBox="0 0 30 30"><circle cx="15" cy="15" r="15" fill="#fcebd1"/><path d="M9.1 9.7 L22.3 23.3 M22.3 9.7 L9.1 23.3" stroke="#bfa53c" stroke-width="1.45" fill="none"/></svg><svg class="ai" style="left:1733px" width="26" height="26" viewBox="0 0 26 26"><circle cx="12.5" cy="12.45" r="10.65" fill="#fff" stroke="#a7bac7" stroke-width="1.5"/><circle cx="12.5" cy="6.95" r="1.5" fill="#9fb4c2"/><circle cx="12.5" cy="12.45" r="1.5" fill="#9fb4c2"/><circle cx="12.5" cy="17.95" r="1.5" fill="#9fb4c2"/></svg></div>
<div class="row"><span class="t" style="left:18.2px;transform:translateY(-0.35px) scaleX(0.9423);">71</span><span class="t" style="left:94.0px;transform:translateY(-0.35px) scaleX(0.9343);">NaviFleet Dv</span><span class="t" style="left:243.7px;transform:translateY(-0.35px) scaleX(1.0528);">M</span><span class="bdg"></span><span class="t" style="left:282.3px;transform:translateY(-0.35px) scaleX(0.8921);">+ 1 more</span><span class="t lk" style="left:416.2px;transform:translateY(-0.35px) scaleX(1.0192);">5</span><span class="t lk" style="left:505.7px;transform:translateY(-0.35px) scaleX(1.0192);">3</span><span class="t" style="left:595.2px;transform:translateY(-0.35px) scaleX(1.0192);">0</span><span class="t" style="left:893.3px;transform:translateY(-0.35px) scaleX(0.9359);">180</span><span class="t" style="left:999.8px;transform:translateY(-0.35px) scaleX(1.0043);">29/05/2025</span><svg class="xi" style="left:1184.5px" width="30" height="30" viewBox="0 0 30 30"><circle cx="15" cy="15" r="15" fill="#fcebd1"/><path d="M9.1 9.7 L22.3 23.3 M22.3 9.7 L9.1 23.3" stroke="#bfa53c" stroke-width="1.45" fill="none"/></svg><svg class="xi" style="left:1334px" width="30" height="30" viewBox="0 0 30 30"><circle cx="15" cy="15" r="15" fill="#fcebd1"/><path d="M9.1 9.7 L22.3 23.3 M22.3 9.7 L9.1 23.3" stroke="#bfa53c" stroke-width="1.45" fill="none"/></svg><svg class="xi" style="left:1483.5px" width="30" height="30" viewBox="0 0 30 30"><circle cx="15" cy="15" r="15" fill="#fcebd1"/><path d="M9.1 9.7 L22.3 23.3 M22.3 9.7 L9.1 23.3" stroke="#bfa53c" stroke-width="1.45" fill="none"/></svg><svg class="xi" style="left:1633px" width="30" height="30" viewBox="0 0 30 30"><circle cx="15" cy="15" r="15" fill="#fcebd1"/><path d="M9.1 9.7 L22.3 23.3 M22.3 9.7 L9.1 23.3" stroke="#bfa53c" stroke-width="1.45" fill="none"/></svg><svg class="ai" style="left:1733px" width="26" height="26" viewBox="0 0 26 26"><circle cx="12.5" cy="12.45" r="10.65" fill="#fff" stroke="#a7bac7" stroke-width="1.5"/><circle cx="12.5" cy="6.95" r="1.5" fill="#9fb4c2"/><circle cx="12.5" cy="12.45" r="1.5" fill="#9fb4c2"/><circle cx="12.5" cy="17.95" r="1.5" fill="#9fb4c2"/></svg></div>
  </div>
</div></div>
<div id="sb"></div>

<div id="foot">
  <div id="showing"><span class="t" style="left:0.0px;transform:scaleX(0.9221);">Showing 1 - 20/83</span></div>
  <div id="perpage"><span class="t" style="left:0.0px;transform:scaleX(0.8593);">Per Page</span></div>
  <div id="sel"><span class="t" style="left:10.5px;transform:scaleX(0.9855);">20</span>
    <svg width="14" height="12" viewBox="0 0 14 12" fill="none" stroke="#222" stroke-width="2" stroke-linecap="round" stroke-linejoin="round"><path d="M2.5 3 L6.95 7.9 L11.4 3"/></svg>
  </div>
  <div id="pg">
    <div style="left:0;width:45.5px;background:#eff3f8"><svg style="left:10px" width="24" height="22" viewBox="0 0 24 22" fill="none" stroke="#93a9b9" stroke-width="2.4" stroke-linecap="round" stroke-linejoin="round"><path d="M11 3.4 L3 11 L11 18.6 M20.6 3.4 L12.6 11 L20.6 18.6"/></svg></div>
    <div style="left:45.5px;width:46.6px;background:#eff3f8"><svg style="left:15.5px" width="14" height="22" viewBox="0 0 14 22" fill="none" stroke="#93a9b9" stroke-width="2.4" stroke-linecap="round" stroke-linejoin="round"><path d="M11 3.4 L3 11 L11 18.6"/></svg></div>
    <div style="left:92.1px;width:29.7px;top:0;height:36px;background:#0669d1;border-right:none"><span class="t" style="left:9.8px;transform:scaleX(0.9038);color:#fff;">1</span></div>
    <div style="left:121.8px;width:30.5px"><span class="t" style="left:10.0px;transform:scaleX(0.9615);">2</span></div>
    <div style="left:152.3px;width:32.2px"><span class="t" style="left:10.5px;transform:scaleX(0.7698);">...</span></div>
    <div style="left:184.5px;width:31.1px"><span class="t" style="left:10.5px;transform:scaleX(0.9615);">5</span></div>
    <div style="left:215.6px;width:45.8px"><svg style="left:15px" width="14" height="22" viewBox="0 0 14 22" fill="none" stroke="#93a9b9" stroke-width="2.4" stroke-linecap="round" stroke-linejoin="round"><path d="M3 3.4 L11 11 L3 18.6"/></svg></div>
    <div style="left:261.4px;width:45.6px;border-right:none"><svg style="left:10px" width="24" height="22" viewBox="0 0 24 22" fill="none" stroke="#93a9b9" stroke-width="2.4" stroke-linecap="round" stroke-linejoin="round"><path d="M3.4 3.4 L11.4 11 L3.4 18.6 M13 3.4 L21 11 L13 18.6"/></svg></div>
  </div>
</div>
<div id="edge"></div><div id="edge2"></div><div id="ring"></div><svg style="position:absolute;left:72px;top:354px" width="14" height="18" viewBox="0 0 14 18"><path d="M14 0.9 L1.5 8.5 L14 16.1 Z" fill="#f4f6fa"/></svg>
<div id="frame"></div>
</body>
</html>
